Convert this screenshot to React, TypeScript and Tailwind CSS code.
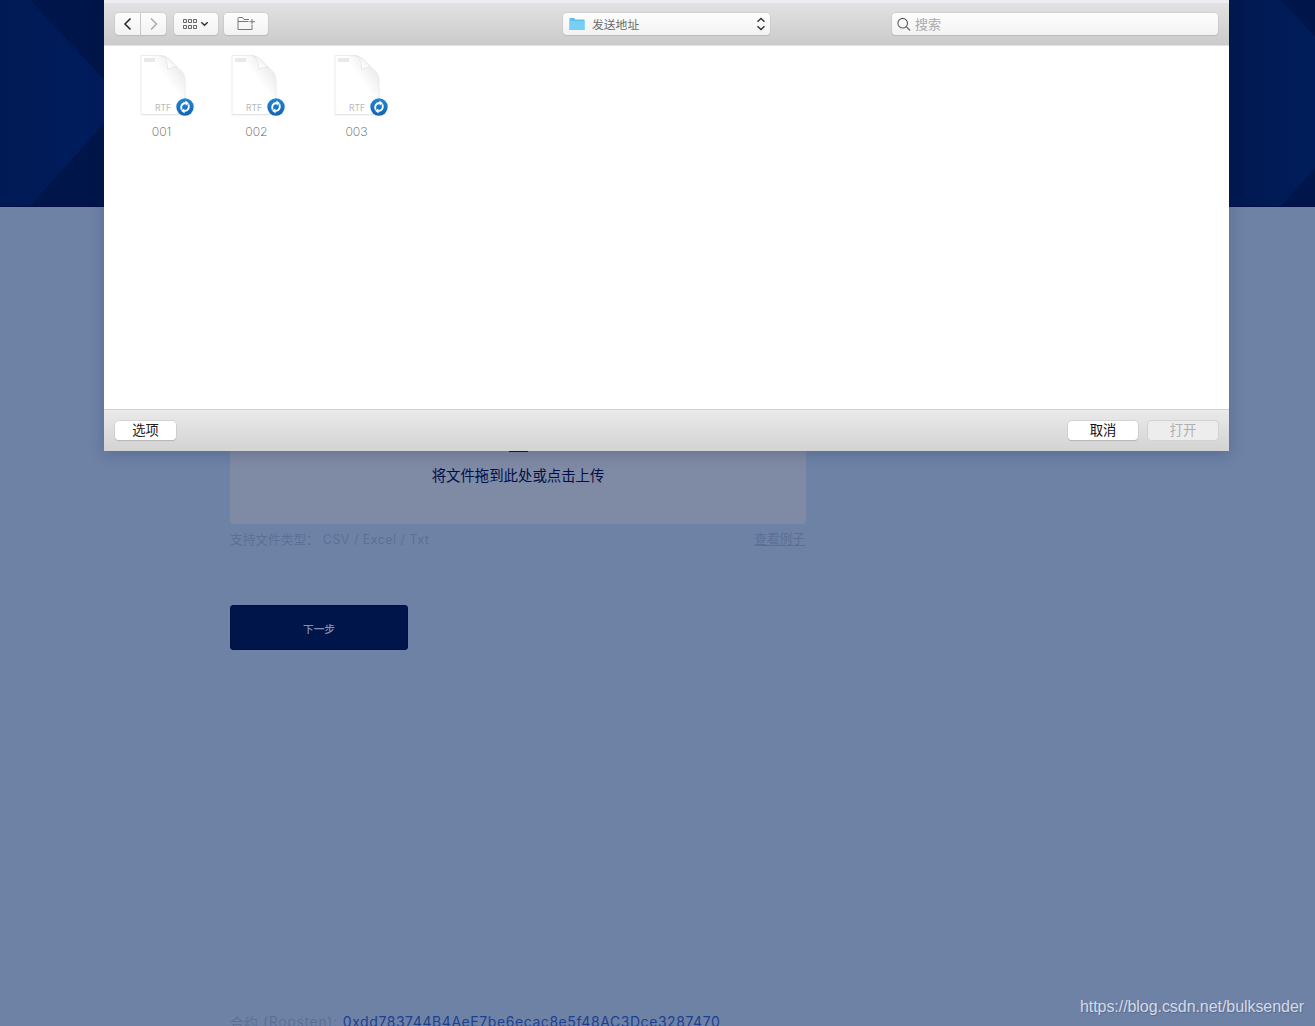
import { ReactNode } from "react";

const files = [
  { name: "001", cell: "w-[91px]", label: "w-[43px] ml-0" },
  { name: "002", cell: "w-[103px]", label: "w-[43px] ml-[4px]" },
  { name: "003", cell: "w-[91px]", label: "w-[43px] ml-[1px]" }
];

function ToolButton({ className, children }: { className: string; children: ReactNode }) {
  return (
    <button
      className={`flex h-[22px] items-center justify-center bg-gradient-to-b from-[#fdfdfd] to-[#f2f2f2] shadow-[0_0_0_0.5px_#c4c4c4,0_1px_1px_#b2b2b2] ${className}`}
    >
      {children}
    </button>
  );
}

function FileIcon({ id }: { id: string }) {
  return (
    <svg width="54" height="64" viewBox="0 0 54 64" className="block shrink-0">
      <defs>
        <linearGradient id={`page-${id}`} x1="0.2" y1="0.8" x2="0.9" y2="0.1">
          <stop offset="0.55" stopColor="#ffffff" />
          <stop offset="0.9" stopColor="#ececec" />
        </linearGradient>
        <linearGradient id={`fold-${id}`} x1="0" y1="1" x2="0.7" y2="0.3">
          <stop offset="0" stopColor="#f0f0f0" />
          <stop offset="0.5" stopColor="#ffffff" />
          <stop offset="1" stopColor="#f0f0f0" />
        </linearGradient>
        <linearGradient id={`sync-${id}`} x1="0" y1="0" x2="0" y2="1">
          <stop offset="0" stopColor="#2186d2" />
          <stop offset="1" stopColor="#1263b4" />
        </linearGradient>
      </defs>
      <path
        d="M1 1.5H21C27 2 33 8.500 37 13.500C42 16.500 45 20 45 27V60.500H1Z"
        fill={`url(#page-${id})`}
        stroke="#ebebeb"
        strokeWidth="1"
      />
      <path d="M1 60.800H45" stroke="#e0e0e0" strokeWidth="0.800" />
      <path
        d="M21 1.500C26 3.500 28 9 27.500 15.500C31 13.500 34 13 37 13.500C33 8.500 27 2 21 1.500Z"
        fill={`url(#fold-${id})`}
        stroke="#dfdfdf"
        strokeWidth="0.600"
      />
      <rect x="4" y="4" width="11" height="4" fill="#e9e9e9" />
      <text x="15" y="56.500" fontSize="8.500" letterSpacing="0" fill="#b8b8b8" fontFamily="Inter, sans-serif">
        RTF
      </text>
      {/* Sync badge */}
      <circle cx="45" cy="53" r="8.700" fill={`url(#sync-${id})`} />
      <g fill="none" stroke="#fff" strokeWidth="1.900">
        <path d="M41.600 55.800C40.300 52 42 49 45.800 49" />
        <path d="M48.400 50.200C49.700 54 48 57 44.200 57" />
      </g>
      <path d="M45.300 46.600L49 49.300L45.700 51.400ZM44.700 59.400L41 56.700L44.300 54.600Z" fill="#fff" />
    </svg>
  );
}

function OpenDialog() {
  return (
    <div className="absolute left-[104px] top-0 flex h-[451px] w-[1125px] flex-col bg-white shadow-[0_3px_14px_rgba(20,30,65,0.22)]">
      {/* Toolbar */}
      <div className="flex h-[46px] shrink-0 items-start border-b border-[#e2e2e2] border-t-[3px] border-t-[#eeeef2] bg-gradient-to-b from-[#e2e2e2] to-[#cbcbcb] px-[11px] pt-[10px]">
        <div className="flex gap-px">
          <ToolButton className="w-[25px] rounded-l-[4px]">
            <svg width="10" height="14" viewBox="0 0 10 14" fill="none" stroke="#222" strokeWidth="1.500">
              <path d="M7.500 1.500L2 7L7.500 12.500" />
            </svg>
          </ToolButton>
          <ToolButton className="w-[25px] rounded-r-[4px]">
            <svg width="10" height="14" viewBox="0 0 10 14" fill="none" stroke="#a5a5a5" strokeWidth="1.400">
              <path d="M2 1.500L7.500 7L2 12.500" />
            </svg>
          </ToolButton>
        </div>
        <ToolButton className="ml-2 w-11 rounded-[4px]">
          <svg width="28" height="14" viewBox="0 0 28 14" fill="none" stroke="#666" strokeWidth="1">
            <path d="M1.500 2.500H4.500V5.500H1.500ZM6.500 2.500H9.500V5.500H6.500ZM11.500 2.500H14.500V5.500H11.500ZM1.500 8.500H4.500V11.500H1.500ZM6.500 8.500H9.500V11.500H6.500ZM11.500 8.500H14.500V11.500H11.500Z" />
            <path d="M19.300 5.300L22.500 8.300L25.700 5.300" stroke="#333" strokeWidth="1.500" />
          </svg>
        </ToolButton>
        <ToolButton className="ml-[6px] w-11 rounded-[4px]">
          <svg width="20" height="14" viewBox="0 0 20 14" fill="none" stroke="#777" strokeWidth="1">
            <path d="M13 2.500H8L6.500 0.500H3Q2 0.500 2 1.500V12.500H16V8M2 4.500H12.500M16 2V7.500M13.500 4.700H19" />
          </svg>
        </ToolButton>

        <ToolButton className="ml-[295px] w-[207px] rounded-[4px] pl-[6px] pr-1">
          <svg width="17" height="14" viewBox="0 0 17 14">
            <path d="M0.500 1.500Q0.500 1 1 1H5L6.500 2.500H15.500V13H0.500Z" fill="#5fbfec" />
            <path d="M0.500 4H15.500V13H0.500Z" fill="#76cff5" />
          </svg>
          <span className="ml-[6px] flex-1 text-left text-[11.800px] leading-[22px] text-[#6b6b6b]">发送地址</span>
          <svg width="10" height="14" viewBox="0 0 10 14" fill="none" stroke="#333" strokeWidth="1.400">
            <path d="M1.500 4.800L5 1.500L8.500 4.800M1.500 9.200L5 12.500L8.500 9.200" />
          </svg>
        </ToolButton>

        <ToolButton className="ml-[122px] w-[326px] rounded-[4px] pl-[5px]">
          <svg width="14" height="14" viewBox="0 0 14 14" fill="none" stroke="#5d5d5d" strokeWidth="1.100">
            <circle cx="5.700" cy="6.200" r="4.800" />
            <path d="M9.200 9.700L13 13.500" />
          </svg>
          <span className="ml-1 flex-1 text-left text-[13px] leading-[22px] text-[#aaaaaa]">搜索</span>
        </ToolButton>
      </div>

      {/* File list */}
      <div className="flex flex-1 pl-9 pt-2">
        {files.map((file) => (
          <div key={file.name} className={file.cell}>
            <FileIcon id={file.name} />
            <div className={`mt-[6px] text-center font-['Inter'] text-[12.300px] font-extralight leading-4 text-[#555] ${file.label}`}>
              {file.name}
            </div>
          </div>
        ))}
      </div>

      {/* Action bar */}
      <div className="flex h-[42px] shrink-0 items-start border-t border-t-[#d2d2d2] bg-gradient-to-b from-[#eaeaea] to-[#d3d3d3] px-[11px] pt-[11px] text-[13.300px]">
        <button className="h-[19px] w-[61px] rounded-[4px] bg-white pb-[2px] leading-[17px] text-[#222] shadow-[0_0_0_0.5px_#c4c4c4,0_1px_1px_#aaa]">选项</button>
        <button className="ml-auto h-[19px] w-[70px] rounded-[4px] bg-white pb-[2px] leading-[17px] text-[#111] shadow-[0_0_0_0.5px_#c4c4c4,0_1px_1px_#aaa]">取消</button>
        <button className="ml-[10px] h-[19px] w-[70px] rounded-[4px] bg-[#ededed] pb-[2px] leading-[17px] text-[#b0b0b0] shadow-[0_0_0_1px_#d2d2d2]">打开</button>
      </div>
    </div>
  );
}

export default function App() {
  return (
    <div className="relative h-[1026px] w-[1315px] overflow-hidden bg-[#6e82a6] font-['Noto_Sans_CJK_SC',sans-serif]">
      {/* Header with angular pattern */}
      <header className="h-[207px] border-b border-[#020c45]">
        <svg width="1315" height="206" viewBox="0 0 1315 206" className="block">
          <defs>
            <linearGradient id="hero-left" x1="0" x2="112" gradientUnits="userSpaceOnUse">
              <stop offset="0" stopColor="#001a55" />
              <stop offset="1" stopColor="#001c5d" />
            </linearGradient>
            <linearGradient id="hero-right" x1="1229" x2="1315" gradientUnits="userSpaceOnUse">
              <stop offset="0" stopColor="#001850" />
              <stop offset="1" stopColor="#001d5b" />
            </linearGradient>
          </defs>
          <rect width="1315" height="206" fill="#001549" />
          <path d="M0 0H30L124 101L30 206H0Z" fill="url(#hero-left)" />
          <path d="M1200 0H1281L1375 101L1281 206H1200Z" fill="url(#hero-right)" />
        </svg>
      </header>

      <main className="ml-[230px] flex h-[819px] w-[576px] flex-col">
        {/* Upload area */}
        <div className="mt-[163px] flex h-[154px] shrink-0 flex-col items-center rounded-[3px] bg-[#7f8aa4] pt-[80px]">
          <div className="h-[2px] w-[19px] shrink-0 bg-[#10193d]" />
          <p className="mt-[11px] text-[14.400px] leading-6 text-[#000e48]">将文件拖到此处或点击上传</p>
        </div>
        <div className="mt-[5px] flex h-5 justify-between text-[12.700px] leading-5 text-[#5c7097]">
          <div className="flex">
            <span>支持文件类型：</span>
            <span className="ml-[4px] mt-px font-['Inter'] text-[12.500px] tracking-[0.450px]">CSV / Excel / Txt</span>
          </div>
          <a className="-mt-px mr-[1px] underline underline-offset-2">查看例子</a>
        </div>
        <button className="mt-14 h-[45px] w-[178px] shrink-0 rounded-[3px] border border-[#000d40] bg-[#00154a] pt-[3px] text-[10.700px] font-medium text-[#8290ad]">
          下一步
        </button>

        <div className="mt-[362px] flex h-5 shrink-0 whitespace-nowrap text-[14px] leading-5">
          <span className="text-[#5c7097]">合约</span>
          <span className="ml-[5px] font-['Inter'] tracking-[0.650px] text-[#5c7097]">(Ropsten):</span>
          <a className="ml-[5px] font-['Inter'] text-[14px] tracking-[0.570px] text-[#1c4090]">0xdd783744B4AeE7be6ecac8e5f48AC3Dce3287470</a>
        </div>
      </main>

      <OpenDialog />

      <div className="absolute bottom-[9px] right-[11px] font-['Liberation_Sans'] text-[16px] leading-5 tracking-[-0.060px] text-[#d4dae4] [text-shadow:1px_1px_1px_#566a91]">
        https://blog.csdn.net/bulksender
      </div>
    </div>
  );
}
